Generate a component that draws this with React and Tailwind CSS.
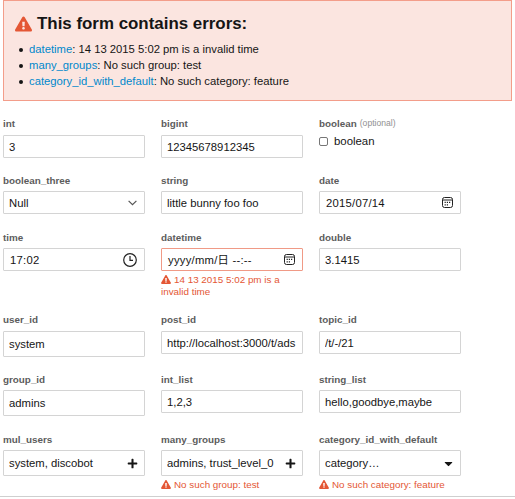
import { FaExclamationTriangle, FaPlus, FaCaretDown } from 'react-icons/fa'

const summary = [
    { field: 'datetime', message: '14 13 2015 5:02 pm is a invalid time' },
    { field: 'many_groups', message: 'No such group: test' },
    { field: 'category_id_with_default', message: 'No such category: feature' },
]

const rows = [
    {
        height: 'h-[57px]',
        labelHeight: 'h-[18px]',
        fields: [
            { label: 'int', value: '3' },
            { label: 'bigint', value: '12345678912345' },
            { label: 'boolean', type: 'checkbox', optional: true },
        ],
    },
    {
        height: 'h-[57px]',
        labelHeight: 'h-[17px]',
        fields: [
            { label: 'boolean_three', value: 'Null', icon: 'chevron' },
            { label: 'string', value: 'little bunny foo foo' },
            { label: 'date', value: '2015/07/14', icon: 'calendar', spaced: true },
        ],
    },
    {
        height: 'h-[82px]',
        labelHeight: 'h-[17px]',
        fields: [
            { label: 'time', value: '17:02', icon: 'clock', spaced: true },
            {
                label: 'datetime',
                value: 'yyyy/mm/日 --:--',
                icon: 'calendar',
                spaced: true,
                error: '14 13 2015 5:02 pm is a invalid time',
                invalid: true,
            },
            { label: 'double', value: '3.1415' },
        ],
    },
    {
        height: 'h-[60px]',
        labelHeight: 'h-[18px]',
        fields: [
            { label: 'user_id', value: 'system', tall: true },
            { label: 'post_id', value: 'http://localhost:3000/t/ads' },
            { label: 'topic_id', value: '/t/-/21' },
        ],
    },
    {
        height: 'h-[60px]',
        labelHeight: 'h-[17px]',
        fields: [
            { label: 'group_id', value: 'admins', tall: true },
            { label: 'int_list', value: '1,2,3' },
            { label: 'string_list', value: 'hello,goodbye,maybe' },
        ],
    },
    {
        height: 'h-[63px]',
        labelHeight: 'h-[17px]',
        fields: [
            { label: 'mul_users', value: 'system, discobot', icon: 'plus', tall: true },
            { label: 'many_groups', value: 'admins, trust_level_0', icon: 'plus', tall: true, error: 'No such group: test' },
            { label: 'category_id_with_default', value: 'category…', icon: 'caret', tall: true, error: 'No such category: feature' },
        ],
    },
]

const Icon = ({ name }) => {
    switch (name) {
        case 'chevron':
            return (
                <svg className="w-[9px] h-[6px] mr-[7px] shrink-0" viewBox="0 0 9 6" fill="none" stroke="#555" strokeWidth="1.2">
                    <path d="M0.6 0.8 4.5 4.7 8.4 0.8" />
                </svg>
            )
        case 'calendar':
            return (
                <svg className="w-[11px] h-[11px] mr-[7px] shrink-0" viewBox="0 0 11 11" fill="none" stroke="#222" strokeWidth="1">
                    <rect x="0.5" y="0.5" width="10" height="10" rx="2" />
                    <path d="M0.5 3h10" />
                    <path d="M4.8 5.4h1.2M7 5.4h1.2M2.6 7.8h1.2M4.8 7.8h1.2M2.6 5.4h1.2" strokeWidth="1.2" />
                </svg>
            )
        case 'clock':
            return (
                <svg className="w-[14px] h-[14px] mr-[7px] shrink-0" viewBox="0 0 14 14" fill="none" stroke="#222" strokeWidth="1.2">
                    <circle cx="7" cy="7" r="6.3" />
                    <path d="M7 3v4.4h3" />
                </svg>
            )
        case 'plus':
            return <FaPlus className="w-[11px] h-[11px] mr-[6px] shrink-0" />
        case 'caret':
            return <FaCaretDown className="w-[11px] h-[13px] mr-[6px] shrink-0" />
        default:
            return null
    }
}

const Field = ({ field, labelHeight }) => (
    <div className="min-w-0">
        <div className={`flex gap-[3px] leading-[14px] text-[9.85px] font-bold text-[#5c5c5c] whitespace-nowrap ${labelHeight}`}>
            {field.label}
            {field.optional && <span className="text-[8.6px] leading-[13px] font-normal text-[#919191]">(optional)</span>}
        </div>
        {field.type === 'checkbox' ? (
            <div className="flex items-center h-[13px] gap-[6px] text-[11.4px]">
                <span className="w-[9px] h-[9px] border border-[#767676] rounded-[2px] bg-white" />
                <span>{field.label}</span>
            </div>
        ) : (
            <div
                className={`flex items-center border rounded-[1px] bg-white pl-[5px] ${field.tall ? 'h-[26px]' : 'h-[23px]'} ${field.invalid ? 'border-[#f09a86]' : 'border-[#d4d4d4]'}`}
            >
                <span className={`flex-1 min-w-0 overflow-hidden whitespace-nowrap leading-[16px] ${field.icon ? '' : 'mr-[5px]'} ${field.spaced ? 'pl-[1px] tracking-[0.25px]' : ''}`}>
                    {field.value}
                </span>
                <Icon name={field.icon} />
            </div>
        )}
        {field.error && (
            <div className="mt-[3px] text-[9.85px] leading-[12px] text-[#e45735]">
                <FaExclamationTriangle className="inline-block w-[10px] h-[9px] mr-[3px] align-[-1px]" />
                {field.error}
            </div>
        )}
    </div>
)

const App = () => {
    return (
        <div className="w-[515px] h-[499px] overflow-hidden bg-white font-['Liberation_Sans','Noto_Sans_CJK_JP',sans-serif] text-[11.28px] text-[#151515]">
            <div className="mx-[3px] h-[101px] border border-[#f39d8a] bg-[#fbe5e0] px-[11px] pt-[12px]">
                <h2 className="flex items-center gap-[5px] h-[21px] text-[16.9px] leading-[21px] font-bold">
                    <FaExclamationTriangle className="w-[17px] h-[16px] text-[#e45735]" />
                    This form contains errors:
                </h2>
                <ul className="mt-[7px] pl-[4px] leading-[16px]">
                    {summary.map((item) => (
                        <li key={item.field} className="flex items-center before:w-[4px] before:h-[4px] before:mt-px before:mr-[6px] before:rounded-full before:bg-[#151515]">
                            <p>
                                <span className="text-[#0088cc]">{item.field}</span>: {item.message}
                            </p>
                        </li>
                    ))}
                </ul>
            </div>

            <div className="pt-[16px] pl-[3px]">
                {rows.map((row, i) => (
                    <div key={i} className={`grid grid-cols-[142px_142px_142px] gap-x-4 ${row.height}`}>
                        {row.fields.map((field) => (
                            <Field key={field.label} field={field} labelHeight={row.labelHeight} />
                        ))}
                    </div>
                ))}
            </div>
            <div className="h-px bg-[#cfcfcf]" />
        </div>
    )
}

export default App
